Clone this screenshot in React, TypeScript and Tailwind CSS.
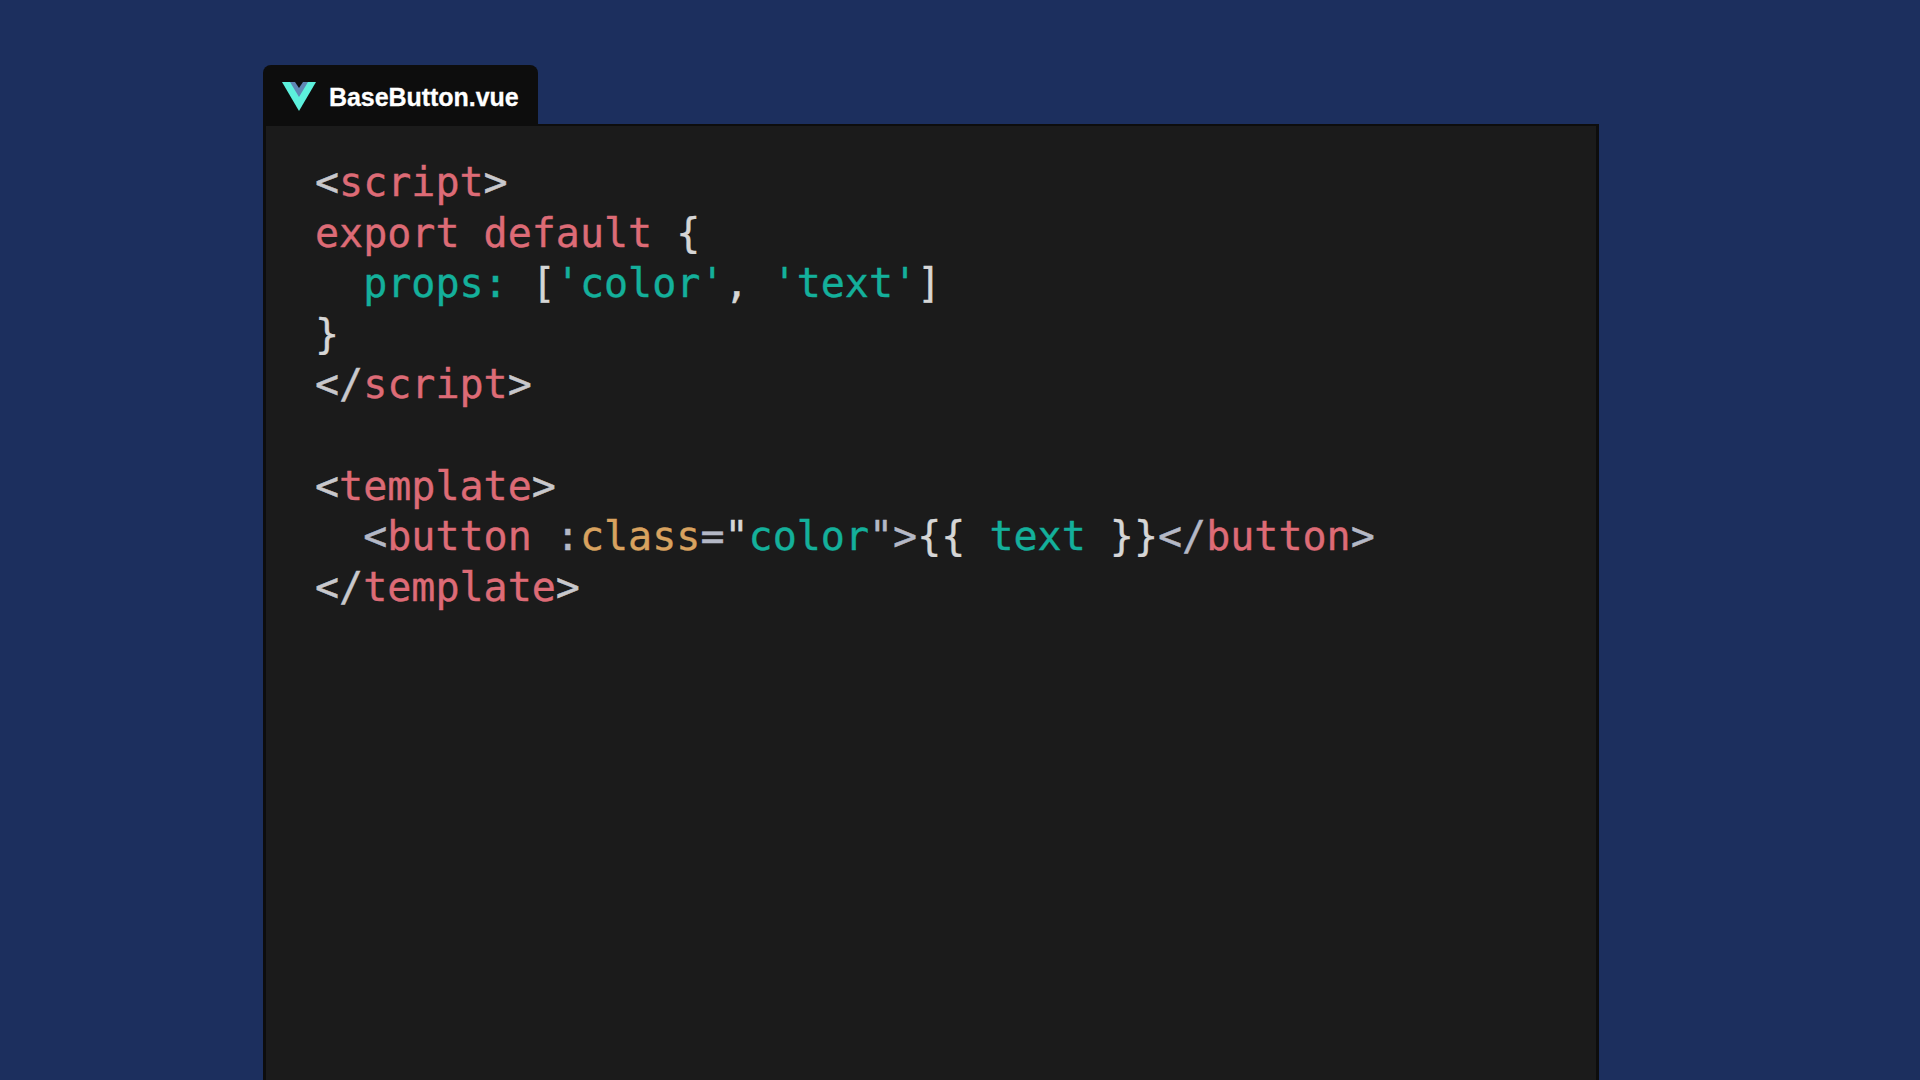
const red = "text-[#dd6b76]";
const teal = "text-[#14b09b]";
const gray = "text-[#c8c8cc]";
const orange = "text-[#d8a25f]";
const slate = "text-[#b4b8c6]";
const white = "text-[#d6d6d6]";

function VueLogo() {
  return (
    <svg width="34" height="30" viewBox="0 0 34 30" className="mt-[2px] shrink-0">
      <polygon points="0,1 34,1 17,30" fill="#5cf0dc" />
      <polygon points="8,1 26,1 17,16" fill="#5f86b4" />
      <polygon points="13,1 21,1 17,7" fill="#0d0d0d" />
    </svg>
  );
}

export default function App() {
  return (
    <div className="flex h-screen flex-col overflow-hidden bg-[#1c2f5e] pt-[65px] pl-[263px] font-['DejaVu_Sans_Mono',monospace]">
      <div className="flex h-[59px] w-[275px] shrink-0 items-center gap-[13px] rounded-t-lg bg-[#0d0d0d] pl-[19px]">
        <VueLogo />
        <span className="mt-[6px] font-['Liberation_Sans',sans-serif] text-[25px] font-bold tracking-[-0.05px] text-white [-webkit-text-stroke:0.3px]">BaseButton.vue</span>
      </div>
      <div className="w-[1336px] flex-1 border-x-[3px] border-t-[2px] border-[#0d0d0d] bg-[#1b1b1b] pt-[31px] pl-[49px] text-[40px] leading-[50.6px] whitespace-pre [-webkit-text-stroke:0.4px]">
        <div><span className={gray}>&lt;</span><span className={red}>script</span><span className={gray}>&gt;</span></div>
        <div><span className={red}>export default</span><span className={white}> {"{"}</span></div>
        <div><span className={teal}>  props:</span><span className={white}> [</span><span className={teal}>'color'</span><span className={white}>, </span><span className={teal}>'text'</span><span className={white}>]</span></div>
        <div><span className={white}>{"}"}</span></div>
        <div><span className={gray}>&lt;/</span><span className={red}>script</span><span className={gray}>&gt;</span></div>
        <div>&nbsp;</div>
        <div><span className={gray}>&lt;</span><span className={red}>template</span><span className={gray}>&gt;</span></div>
        <div>
          <span>  </span><span className={slate}>&lt;</span><span className={red}>button</span><span> </span><span className={slate}>:</span><span className={orange}>class</span><span className={slate}>=</span><span className={white}>"</span><span className={teal}>color</span><span className={slate}>"&gt;</span><span className={white}>{"{{"} </span><span className={teal}>text</span><span className={white}> {"}}"}</span><span className={slate}>&lt;/</span><span className={red}>button</span><span className={slate}>&gt;</span>
        </div>
        <div><span className={gray}>&lt;/</span><span className={red}>template</span><span className={gray}>&gt;</span></div>
      </div>
    </div>
  );
}
